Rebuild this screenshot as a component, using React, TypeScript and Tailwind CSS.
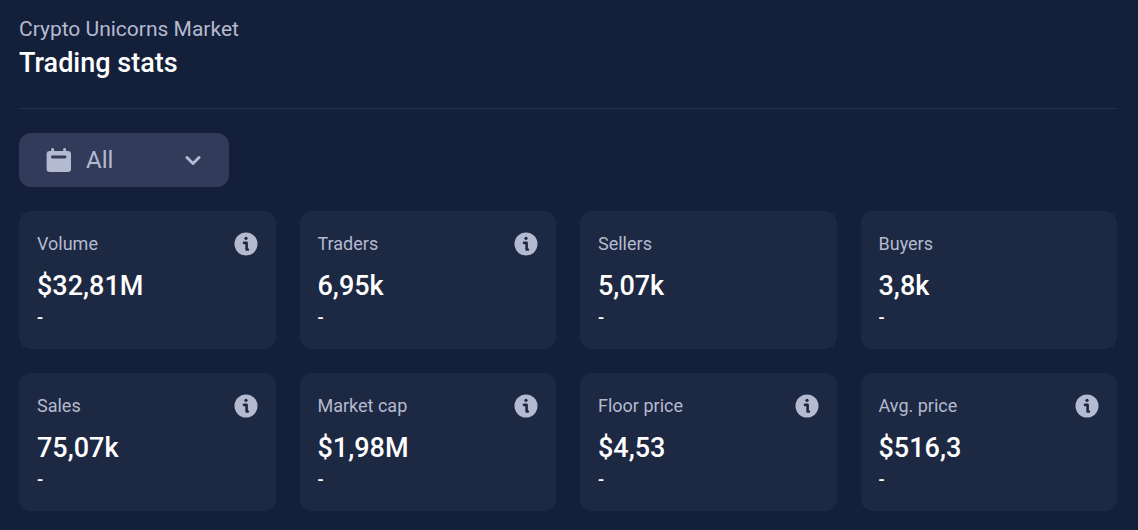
import { useState } from "react";

type Stat = { label: string; value: string; info?: boolean };

const stats: Stat[] = [
  { label: "Volume", value: "$32,81M", info: true },
  { label: "Traders", value: "6,95k", info: true },
  { label: "Sellers", value: "5,07k" },
  { label: "Buyers", value: "3,8k" },
  { label: "Sales", value: "75,07k", info: true },
  { label: "Market cap", value: "$1,98M", info: true },
  { label: "Floor price", value: "$4,53", info: true },
  { label: "Avg. price", value: "$516,3", info: true },
];

function CalendarIcon() {
  return (
    <svg className="pointer-events-none col-start-1 row-start-1 ml-[27px] h-6 w-[26px]" viewBox="0 0 26 24" fill="#b4bad0" aria-hidden="true">
      <rect x="0.6" y="3" width="24.4" height="21" rx="3" />
      <path d="M6.6 1.4v3M18.6 1.4v3" stroke="#b4bad0" strokeWidth="2.8" strokeLinecap="round" />
      <path d="M6.4 9h12.6" stroke="#323b5a" strokeWidth="2.8" strokeLinecap="round" />
    </svg>
  );
}

function InfoIcon() {
  return (
    <svg className="h-6 w-6" viewBox="0 0 24 24" aria-hidden="true">
      <circle cx="12" cy="12" r="11.5" fill="#b4bad0" />
      <circle cx="12" cy="6.3" r="1.6" fill="#1d2842" />
      <path d="M10 10.9h2.6v6.6h1.3" fill="none" stroke="#1d2842" strokeWidth="2.6" strokeLinecap="round" strokeLinejoin="round" />
    </svg>
  );
}

function StatCard({ label, value, info }: Stat) {
  return (
    <article className="rounded-xl bg-[#1d2842] px-[18px] py-5">
      <div className="flex h-[26px] items-center justify-between">
        <h2 className="text-lg leading-6 text-[#b4bad0]">{label}</h2>
        {info && (
          <button type="button" aria-label={`About ${label}`}>
            <InfoIcon />
          </button>
        )}
      </div>
      <p className="mt-[13px] text-[27px] leading-8 font-medium text-white">{value}</p>
      <p className="mt-1 text-lg leading-[23px] font-medium text-white">-</p>
    </article>
  );
}

export default function App() {
  const [period, setPeriod] = useState("All");
  return (
    <main className="min-h-screen bg-[#14203a] pt-4 pr-[21px] pb-[19px] pl-[19px] font-['Roboto',sans-serif]">
      <header className="border-b border-[#27325a] pb-7">
        <p className="text-[21px] leading-[26px] text-[#b4bad0]">Crypto Unicorns Market</p>
        <h1 className="mt-1 text-[27px] leading-[34px] font-medium text-white">Trading stats</h1>
      </header>
      <div className="mt-6 grid h-[54px] w-[210px] items-center rounded-xl bg-[#323b5a]">
        <select
          aria-label="Period"
          value={period}
          onChange={(e) => setPeriod(e.target.value)}
          className="col-start-1 row-start-1 h-full w-full appearance-none rounded-xl bg-transparent pl-[67px] text-2xl text-[#b4bad0]"
        >
          <option>All</option>
          <option>24h</option>
          <option>7d</option>
          <option>30d</option>
        </select>
        <CalendarIcon />
        <svg className="pointer-events-none col-start-1 row-start-1 mr-7 h-4 w-4 justify-self-end" viewBox="0 0 16 16" fill="none" stroke="#b4bad0" strokeWidth="3" strokeLinecap="round" strokeLinejoin="round" aria-hidden="true">
          <path d="M2 5.5l6 6 6-6" />
        </svg>
      </div>
      <section className="mt-6 grid grid-cols-4 gap-6">
        {stats.map((s) => (
          <StatCard key={s.label} {...s} />
        ))}
      </section>
    </main>
  );
}
